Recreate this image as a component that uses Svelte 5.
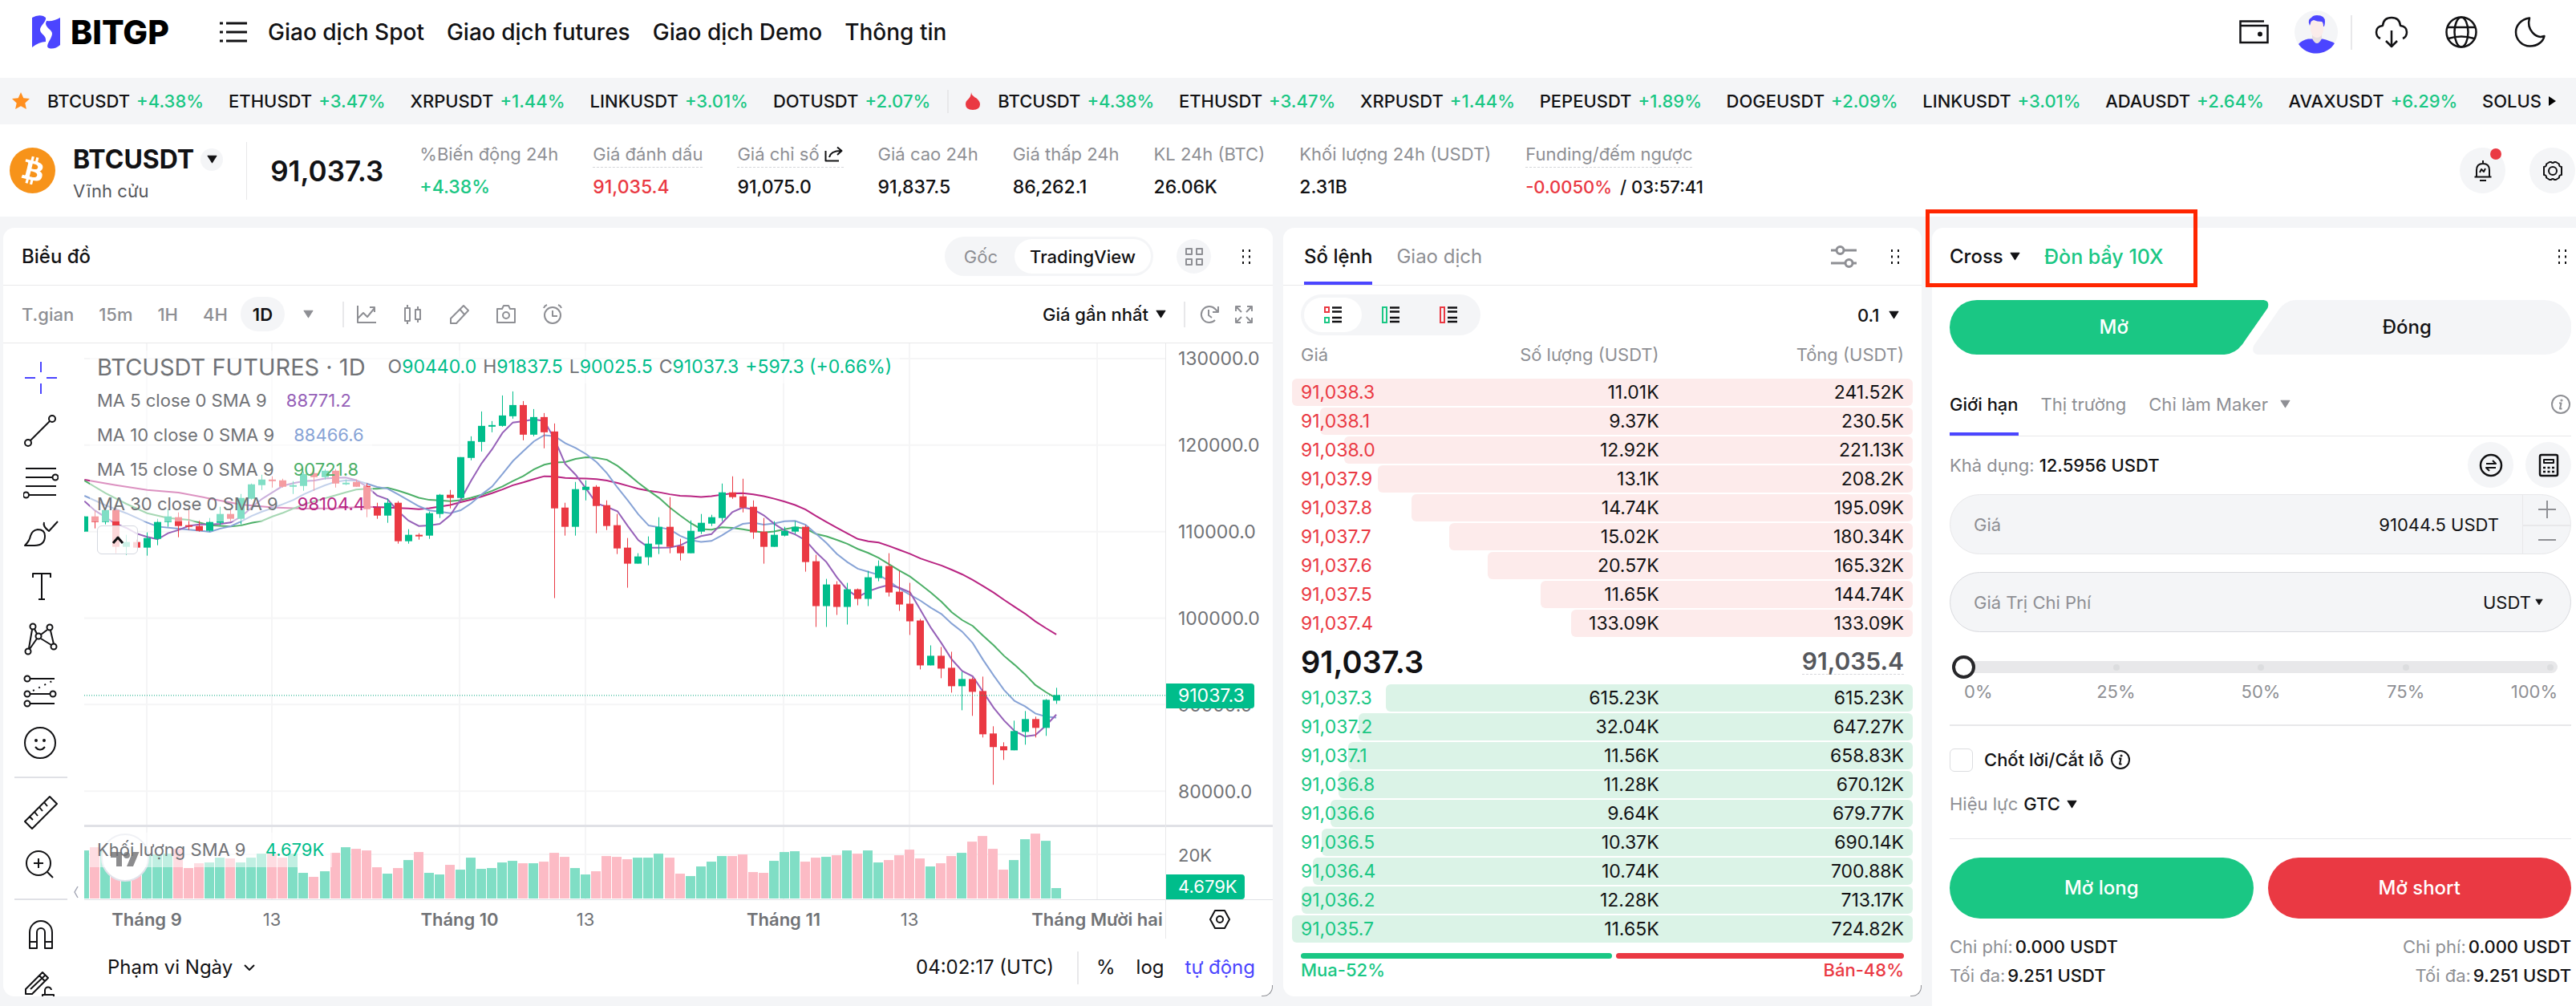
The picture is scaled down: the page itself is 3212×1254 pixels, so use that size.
<script lang="ts">
  type Pair = [string, string];
  type Row = [string, string, string];

  const nav = ['Giao dịch Spot', 'Giao dịch futures', 'Giao dịch Demo', 'Thông tin'];
  const favourites: Pair[] = [
    ['BTCUSDT', '+4.38%'], ['ETHUSDT', '+3.47%'], ['XRPUSDT', '+1.44%'], ['LINKUSDT', '+3.01%'], ['DOTUSDT', '+2.07%'],
  ];
  const hot: Pair[] = [
    ['BTCUSDT', '+4.38%'], ['ETHUSDT', '+3.47%'], ['XRPUSDT', '+1.44%'], ['PEPEUSDT', '+1.89%'],
    ['DOGEUSDT', '+2.09%'], ['LINKUSDT', '+3.01%'], ['ADAUSDT', '+2.64%'], ['AVAXUSDT', '+6.29%'],
  ];
  const intervals = ['T.gian', '15m', '1H', '4H', '1D'];

  const asks: Row[] = [
    ['91,038.3', '11.01K', '241.52K'], ['91,038.1', '9.37K', '230.5K'], ['91,038.0', '12.92K', '221.13K'],
    ['91,037.9', '13.1K', '208.2K'], ['91,037.8', '14.74K', '195.09K'], ['91,037.7', '15.02K', '180.34K'],
    ['91,037.6', '20.57K', '165.32K'], ['91,037.5', '11.65K', '144.74K'], ['91,037.4', '133.09K', '133.09K'],
  ];
  const bids: Row[] = [
    ['91,037.3', '615.23K', '615.23K'], ['91,037.2', '32.04K', '647.27K'], ['91,037.1', '11.56K', '658.83K'],
    ['91,036.8', '11.28K', '670.12K'], ['91,036.6', '9.64K', '679.77K'], ['91,036.5', '10.37K', '690.14K'],
    ['91,036.4', '10.74K', '700.88K'], ['91,036.2', '12.28K', '713.17K'], ['91,035.7', '11.65K', '724.82K'],
  ];
  const depth = (rows: Row[], r: Row) =>
    (100 * parseFloat(r[2])) / Math.max(...rows.map((x) => parseFloat(x[2])));

  // One entry per day: direction, high, body top, body bottom, low, volume top.
  // Levels are thirds of a plot unit.
  const days = `g1122,1122,1179,1179,873 r1100,1122,1142,1167,861 g1090,1098,1143,1152,873 r1090,1098,1236,1260,920
g1190,1218,1236,1265,930 r1210,1218,1239,1240,900 g1182,1203,1239,1269,888 g1130,1143,1206,1230,888
g1095,1122,1143,1161,885 r1107,1125,1158,1200,867 r1095,1155,1161,1173,939 r1137,1158,1176,1179,921
g1128,1143,1176,1180,918 g1087,1113,1145,1155,900 r1095,1113,1131,1140,903 g1038,1052,1131,1152,918
g1000,1002,1055,1060,900 g965,984,1004,1024,885 r972,984,989,1014,885 r980,987,1010,1014,900
g990,1004,1010,1038,885 g955,962,1008,1026,957 r940,960,975,1026,972 g945,951,975,985,951
r945,951,999,1014,882 g985,995,998,1005,861 r985,993,1011,1012,867 r1000,1008,1094,1125,873
r1072,1089,1119,1131,936 g1055,1071,1119,1146,960 r1065,1071,1215,1224,939 g1170,1191,1215,1224,909
r1185,1191,1194,1209,879 g1104,1110,1194,1206,957 g1038,1041,1113,1128,963 r1023,1041,1053,1092,927
g900,900,1053,1053,945 g822,840,903,912,900 g729,783,843,879,942 g765,780,786,807,939
g669,744,783,786,918 g654,705,747,756,912 r690,705,816,837,921 g720,750,816,822,921
r735,750,807,867,915 r774,804,1092,1428,882 r1070,1089,1161,1194,897 g993,1020,1161,1194,939
g987,1011,1022,1062,963 r1005,1011,1083,1185,951 r1062,1080,1158,1173,894 r1113,1155,1242,1263,897
r1203,1239,1299,1389,906 g1260,1272,1299,1300,900 g1197,1224,1275,1305,900 g1125,1161,1227,1263,885
r1050,1161,1236,1260,900 r1206,1233,1260,1287,960 g1137,1176,1260,1260,969 g1113,1146,1179,1188,933
g1116,1125,1149,1158,915 g999,1032,1128,1140,894 r972,1032,1050,1055,894 r981,1047,1089,1107,888
r1062,1086,1182,1206,954 r1128,1179,1236,1299,957 g1140,1191,1236,1236,912 g1160,1176,1194,1197,879
g1140,1161,1179,1188,876 r1155,1161,1293,1329,915 r1266,1290,1458,1536,900 g1356,1377,1458,1536,897
r1366,1377,1461,1491,891 g1371,1395,1461,1527,873 r1392,1395,1431,1455,885 g1326,1350,1431,1458,873
g1287,1308,1353,1365,918 r1260,1308,1407,1422,909 r1326,1404,1452,1476,891 r1371,1449,1515,1566,870
r1506,1512,1680,1695,903 g1605,1644,1680,1680,933 r1611,1644,1692,1728,921 r1629,1689,1758,1782,894
g1704,1731,1758,1848,882 r1725,1731,1779,1869,840 r1722,1776,1938,1950,819 r1908,1935,1986,2127,867
r1968,1983,1998,2034,945 g1887,1926,1998,1998,909 g1851,1881,1929,1977,831 r1872,1881,1914,1950,810
g1806,1809,1914,1944,837 g1764,1791,1812,1824,1014`.split(/\s+/);

  const level = (v: number) => Math.round(v / 3 - 158);
  const dayX = (i: number) => 78.5 + 13.03 * (i - 6);

  const candles = days.map((d, i) => {
    const [hi, top, bottom, lo, vol] = d.slice(1).split(',').map(Number);
    const up = d[0] === 'g';
    return {
      up, x: Math.round(dayX(i) - 0.5), hi: level(hi), top: level(top),
      h: Math.max(2, level(bottom) - level(top)), lo: level(lo),
      close: up ? top : bottom, volTop: Math.round(342 + vol / 3),
    };
  });

  // Moving average line; `lead` holds the points before enough closes exist.
  function average(n: number, lead: [number, number][]) {
    const pts = lead.map(([i, v]) => `${dayX(i).toFixed(1)},${(v / 3 - 158).toFixed(1)}`);
    for (let i = n; i < candles.length; i++) {
      const sum = candles.slice(i - n + 1, i + 1).reduce((s, c) => s + c.close, 0);
      pts.push(`${dayX(i).toFixed(1)},${(sum / n / 3 - 158).toFixed(1)}`);
    }
    return pts.join(' ');
  }
  const averages = [
    { n: 30, color: '#b82482', value: '98104.4', points: average(30, [[0, 985], [3, 1005], [6, 1023], [9, 1033], [12, 1055], [15, 1078], [18, 1088], [21, 1093], [24, 1091], [27, 1086], [29, 1088]]) },
    { n: 15, color: '#4caf67', value: '90721.8', points: average(15, [[0, 988], [2, 1035], [4, 1075], [6, 1110], [8, 1128], [10, 1135], [12, 1155], [14, 1160]]) },
    { n: 10, color: '#87a3d6', value: '88466.6', points: average(10, [[0, 1045], [2, 1080], [4, 1110], [6, 1145], [7, 1160], [9, 1168]]) },
    { n: 5, color: '#9661b8', value: '88771.2', points: average(5, [[0, 1065], [1, 1100], [2, 1125], [3, 1150], [4, 1165]]) },
  ];
  const legend = [...averages].reverse();
  const times = [
    { x: 78, text: 'Tháng 9', month: true }, { x: 234, text: '13', month: false },
    { x: 468, text: 'Tháng 10', month: true }, { x: 625, text: '13', month: false },
    { x: 872, text: 'Tháng 11', month: true }, { x: 1029, text: '13', month: false },
    { x: 1263, text: 'Tháng Mười hai', month: true },
  ];
  const gridY = [19, 127, 235, 343, 451, 559, 638];
  const prices = ['130000.0', '120000.0', '110000.0', '100000.0', '90000.0', '80000.0'];
  const ohlc: Pair[] = [['O', '90440.0'], ['H', '91837.5'], ['L', '90025.5'], ['C', '91037.3']];
  const percents = ['0%', '25%', '50%', '75%', '100%'];
</script>

{#snippet caret()}
  <svg class="caret" viewBox="0 0 12 10" aria-hidden="true"><path d="M1 1h10L6 9z" /></svg>
{/snippet}

{#snippet grip()}
  <button class="plain grip" aria-label="Di chuyển">
    <svg width="12" height="18" viewBox="0 0 12 18"><path d="M1 0h2v3H1zM9 0h2v3H9zM1 7.500h2v3H1zM9 7.500h2v3H9zM1 15h2v3H1zM9 15h2v3H9z" /></svg>
  </button>
{/snippet}

{#snippet drop(name: string, value: string)}
  <label class="drop">
    <select aria-label={name}><option>{value}</option></select>
    {@render caret()}
  </label>
{/snippet}

{#snippet info()}
  <svg class="line" width="26" height="26" viewBox="0 0 26 26" stroke-width="2" aria-hidden="true">
    <circle cx="13" cy="13" r="11" /><path d="M11 11.500h2.500L12 18.500h2.500" /><circle cx="14" cy="8" r="0.600" />
  </svg>
{/snippet}

{#snippet levels(rows: Row[])}
  {#each rows as r}
    <tr>
      <td><span class="bar" style:width="{depth(rows, r)}%"></span>{r[0]}</td>
      <td>{r[1]}</td>
      <td>{r[2]}</td>
    </tr>
  {/each}
{/snippet}

{#snippet costs()}
  <dl class="costs">
    <div><dt>Chi phí:</dt><dd>0.000 USDT</dd></div>
    <div><dt>Tối đa:</dt><dd>9.251 USDT</dd></div>
  </dl>
{/snippet}

<div class="page">
  <header class="top">
    <a class="logo" href="#home">
      <svg width="35" height="42" viewBox="0 0 35 42" aria-hidden="true">
        <path fill="#4b45ff" d="M0 3 Q7-1 14 1 L17 3 C18 8 10 13 10 18 C10 23 17 25 17 30 L17 33 Q9 33 0 40z" />
        <path fill="#4b45ff" d="M35 3 V37 Q28 43 21 41 C15 39 25 29 25 23 C25 18 17 16 17 10 L18 7 Q27 8 35 3z" />
      </svg>
      <span>BITGP</span>
    </a>
    <nav>
      <button class="plain" aria-label="Danh mục">
        <svg class="line" width="34" height="26" viewBox="0 0 34 26" stroke-width="3"><path d="M0 2h4M8 2h26M0 13h4M8 13h26M0 24h4M8 24h26" /></svg>
      </button>
      {#each nav as item}<a href="#nav">{item}</a>{/each}
    </nav>
    <div class="tools">
      <button class="plain" aria-label="Ví">
        <svg class="line" width="38" height="30" viewBox="0 0 38 30" stroke-width="2.500"><path d="M31 1.500H1.500V28h34V7H1.500" stroke-linejoin="miter" /><circle cx="26" cy="17.500" r="1.700" fill="currentColor" /></svg>
      </button>
      <button class="plain avatar" aria-label="Tài khoản">
        <svg width="54" height="54" viewBox="0 0 54 54">
          <circle cx="27" cy="27" r="27" fill="#f4f5f7" />
          <path d="M5 42Q9 37 17 35.500h18q9 2 15 5.500A27 27 0 0 1 5 42z" fill="#4b45ff" />
          <path d="M22 27h12v8q-3 6-6 6t-6-6z" fill="#e8dfe0" />
          <path d="M20 13h16v12q-2 9-8 9t-8-9z" fill="#fbecea" />
          <path d="M19 19q-2-4-1-7 1-2 3-3 2-3 7-3 10 0 10 8 0 3-1 6h-1q0-5-2-6-6 0-10-2-4 1-4 4z" fill="#4b45ff" />
        </svg>
      </button>
      <span class="rule"></span>
      <button class="plain" aria-label="Tải xuống">
        <svg class="line" width="42" height="40" viewBox="0 0 42 40" stroke-width="2.500"><path d="M7 28Q2 26 2 20q0-7 8-8Q11 2 21 2t11 10q8 1 8 8 0 6-5 8M21 18v19M14 31l7 7 7-7" /></svg>
      </button>
      <button class="plain" aria-label="Ngôn ngữ">
        <svg class="line" width="42" height="42" viewBox="0 0 42 42" stroke-width="2.500"><circle cx="21" cy="21" r="18.500" /><ellipse cx="21" cy="21" rx="8.500" ry="18.500" /><path d="M4 15h34M5 29q16-5 32 0" /></svg>
      </button>
      <button class="plain" aria-label="Giao diện tối">
        <svg class="line" width="40" height="40" viewBox="0 0 40 40" stroke-width="2.500"><path d="M19 2.500C8 4 2 12 2 20a17.500 17.500 0 0 0 17.500 17.500C29 37.500 36 32 37.500 25 27 29 15 17 19 2.500z" /></svg>
      </button>
    </div>
  </header>

  <div class="ticker">
    <svg width="22" height="22" viewBox="0 0 24 24" aria-hidden="true"><path fill="#ff8f1f" d="M12 0l3.600 7.800 8.400 1-6.200 5.800 1.700 8.400L12 18.900 4.500 23l1.700-8.400L0 8.800l8.400-1z" /></svg>
    <div class="pairs">
      {#each favourites as [name, change]}<a href="#pair">{name}<b>{change}</b></a>{/each}
    </div>
    <span class="rule"></span>
    <svg width="18" height="22" viewBox="0 0 18 22" aria-hidden="true"><path fill="#ea3943" d="M7 0q0 3 3 5 2 2 3 2 5 4 5 8 0 7-9 7t-9-7q0-4 3-6 4-4 4-9z" /></svg>
    <div class="pairs hot">
      {#each hot as [name, change]}<a href="#pair">{name}<b>{change}</b></a>{/each}
      <a href="#pair">SOLUS</a>
    </div>
    <button class="plain next" aria-label="Tiếp"><svg width="11" height="14" viewBox="0 0 11 14"><path d="M1 1l9 6-9 6z" /></svg></button>
  </div>

  <section class="market">
    <svg class="coin" viewBox="0 0 32 32" aria-hidden="true">
      <circle cx="16" cy="16" r="16" fill="#f7931a" />
      <path fill="#fff" d="M23.189 14.02c.314-2.096-1.283-3.223-3.465-3.975l.708-2.84-1.728-.43-.69 2.765c-.454-.114-.92-.22-1.385-.326l.695-2.783L15.596 6l-.708 2.839c-.376-.086-.746-.17-1.104-.26l.002-.009-2.384-.595-.46 1.846s1.283.294 1.256.312c.7.175.826.638.805 1.006l-.806 3.235c.048.012.11.03.18.057l-.183-.045-1.13 4.532c-.086.212-.303.531-.793.41.018.025-1.256-.313-1.256-.313l-.858 1.978 2.250.561c.418.105.828.215 1.231.318l-.715 2.872 1.727.43.708-2.840c.472.127.93.245 1.378.357l-.706 2.828 1.728.43.715-2.866c2.948.558 5.164.333 6.097-2.333.752-2.146-.037-3.385-1.588-4.192 1.130-.26 1.980-1.003 2.207-2.538zm-3.950 5.538c-.533 2.147-4.148.986-5.320.695l.95-3.805c1.172.293 4.929.872 4.370 3.110zm.535-5.569c-.487 1.953-3.495.96-4.470.717l.86-3.450c.975.243 4.118.696 3.610 2.733z" />
    </svg>
    <div class="symbol">
      <h1>BTCUSDT <button class="plain" aria-label="Chọn cặp">{@render caret()}</button></h1>
      <span>Vĩnh cửu</span>
    </div>
    <span class="rule"></span>
    <strong class="last">91,037.3</strong>
    <dl class="stats">
      <div><dt>%Biến động 24h</dt><dd class="up">+4.38%</dd></div>
      <div><dt class="dotted">Giá đánh dấu</dt><dd class="down">91,035.4</dd></div>
      <div>
        <dt class="dotted">Giá chỉ số <svg class="line" width="24" height="20" viewBox="0 0 24 20" stroke-width="2" aria-hidden="true"><path d="M1.500 6v12.500H18M6 14Q8 6 20 6M16 1.500L21.500 6 16 11" /></svg></dt>
        <dd>91,075.0</dd>
      </div>
      <div><dt>Giá cao 24h</dt><dd>91,837.5</dd></div>
      <div><dt>Giá thấp 24h</dt><dd>86,262.1</dd></div>
      <div><dt>KL 24h (BTC)</dt><dd>26.06K</dd></div>
      <div><dt>Khối lượng 24h (USDT)</dt><dd>2.31B</dd></div>
      <div><dt class="dotted">Funding/đếm ngược</dt><dd class="funding"><span class="down">-0.0050%</span><span>/ 03:57:41</span></dd></div>
    </dl>
    <div class="actions">
      <button class="round" aria-label="Thông báo">
        <svg class="line" width="24" height="28" viewBox="0 0 24 28" stroke-width="2"><path d="M12 1v3M4 21v-8q0-8 8-8t8 8v8M1.500 21.500h21M8 26h8M8 16l2-4 3 3 2-4" /></svg>
        <i class="badge"></i>
      </button>
      <button class="round" aria-label="Cài đặt">
        <svg class="line" width="28" height="28" viewBox="0 0 28 28" stroke-width="2"><path d="M10 3h2q2 2 4 0h2l4 2.500q-.500 3 3 3.500v10q-3.500.500-3 3.500L18 25h-2q-2-2-4 0h-2l-4-2.500q.500-3-3-3.500V9q3.500-.500 3-3.500z" /><circle cx="14" cy="14" r="5" /></svg>
      </button>
    </div>
  </section>

  <main>
    <section class="panel chart">
      <header class="head">
        <h2>Biểu đồ</h2>
        <div class="switch">
          <button>Gốc</button>
          <button class="on">TradingView</button>
        </div>
        <button class="mini" aria-label="Bố cục">
          <svg class="line" width="24" height="24" viewBox="0 0 24 24" stroke-width="2"><rect x="2" y="2" width="7" height="7" /><rect x="15" y="2" width="7" height="7" /><rect x="2" y="15" width="7" height="7" /><rect x="15" y="15" width="7" height="7" /></svg>
        </button>
        {@render grip()}
      </header>
      <div class="toolbar">
        <div class="intervals">
          {#each intervals as t}<button class:on={t === '1D'}>{t}</button>{/each}
        </div>
        <button class="plain more" aria-label="Thêm khung giờ">{@render caret()}</button>
        <span class="rule"></span>
        <div class="drawing">
          <button class="plain" aria-label="Chỉ báo"><svg class="line" width="26" height="24" viewBox="0 0 26 24" stroke-width="2"><path d="M2 1v21h23M2 17l7-7 5 5 9-11M17 3h6v6" /></svg></button>
          <button class="plain" aria-label="Loại nến"><svg class="line" width="26" height="26" viewBox="0 0 26 26" stroke-width="2"><path d="M3 5h6v16H3zM6 1v4M6 21v4M16 7h6v12h-6zM19 3v4M19 19v4" /></svg></button>
          <button class="plain" aria-label="Vẽ"><svg class="line" width="26" height="26" viewBox="0 0 26 26" stroke-width="2"><path d="M18 2l6 6L9 24H2v-6zM13 6l6 7" /></svg></button>
          <button class="plain" aria-label="Chụp màn hình"><svg class="line" width="26" height="26" viewBox="0 0 26 26" stroke-width="2"><path d="M2 6h6l2-4h6l2 4h6v17H2z" /><circle cx="13" cy="14" r="4" /></svg></button>
          <button class="plain" aria-label="Cảnh báo"><svg class="line" width="26" height="26" viewBox="0 0 26 26" stroke-width="2"><circle cx="13" cy="14" r="10" /><path d="M13 8v7h6M2 5q1-3 4-4M24 5q-1-3-4-4" /></svg></button>
        </div>
        <div class="source">{@render drop('Nguồn giá', 'Giá gần nhất')}</div>
        <span class="rule"></span>
        <button class="plain" aria-label="Khôi phục"><svg class="line" width="26" height="24" viewBox="0 0 26 24" stroke-width="2"><path d="M20 19A10 10 0 1 1 20 5l3 3M24 2v7h-7M12 6v7l4 3" /></svg></button>
        <button class="plain" aria-label="Toàn màn hình"><svg class="line" width="22" height="22" viewBox="0 0 22 22" stroke-width="2"><path d="M1 7V1h6M15 1h6v6M21 15v6h-6M7 21H1v-6M1 1l7 7M21 1l-7 7M21 21l-7-7M1 21l7-7" /></svg></button>
      </div>

      <div class="body">
        <div class="strip">
          <button aria-label="Con trỏ"><svg class="line blue" width="44" height="44" viewBox="0 0 44 44" stroke-width="2"><path d="M22 2v13M22 29v13M2 22h13M29 22h13" /></svg></button>
          <button aria-label="Đường xu hướng"><svg class="line" width="44" height="44" viewBox="0 0 44 44" stroke-width="2"><circle cx="6" cy="38" r="4" /><circle cx="36" cy="8" r="4" /><path d="M9 35L33 11" /></svg></button>
          <button aria-label="Fibonacci"><svg class="line" width="44" height="44" viewBox="0 0 44 44" stroke-width="2"><path d="M3 5h38M3 16h34M3 27h38M7 38h34" /><circle cx="40" cy="16" r="3.500" /><circle cx="3.500" cy="38" r="3.500" /></svg></button>
          <button aria-label="Cọ vẽ"><svg class="line" width="44" height="44" viewBox="0 0 44 44" stroke-width="2"><path d="M2 36Q8 30 9 24q2-7 9-8 9 0 9 8 0 12-13 12zM26 7q-2 5 6 11L43 6" /></svg></button>
          <button aria-label="Văn bản"><svg class="line" width="44" height="44" viewBox="0 0 44 44" stroke-width="2"><path d="M12 11V6h22v5M23 6v32M19 38h8" /></svg></button>
          <button aria-label="Mẫu hình"><svg class="line" width="44" height="44" viewBox="0 0 44 44" stroke-width="2"><circle cx="12" cy="7" r="3.500" /><circle cx="33" cy="8" r="3.500" /><circle cx="19" cy="19" r="3.500" /><circle cx="6" cy="38" r="3.500" /><circle cx="38" cy="32" r="3.500" /><path d="M11 11L7 34M14 10l3 6M22 17l8-6M34 12l4 17M22 22l13 8M17 22L8 35" /></svg></button>
          <button aria-label="Dự báo"><svg class="line" width="44" height="44" viewBox="0 0 44 44" stroke-width="2"><circle cx="5" cy="7" r="3.500" /><circle cx="5" cy="26" r="3.500" /><circle cx="5" cy="38" r="3.500" /><circle cx="37" cy="26" r="3.500" /><path d="M9 7h30M9 26h25M9 38h30" /><path d="M12 22L38 9" stroke-dasharray="2 6" /></svg></button>
          <button aria-label="Biểu tượng"><svg class="line" width="44" height="44" viewBox="0 0 44 44" stroke-width="2"><circle cx="21" cy="22" r="19" /><path d="M15 27q6 7 12 0" /><circle cx="16" cy="19" r="1" /><circle cx="26" cy="19" r="1" /></svg></button>
          <hr />
          <button aria-label="Thước"><svg class="line" width="44" height="44" viewBox="0 0 44 44" stroke-width="2"><path d="M33 2l9 9L11 42l-9-9zM8 27l4 4M14 21l4 5M20 15l4 5M26 9l4 5" /></svg></button>
          <button aria-label="Phóng to"><svg class="line" width="44" height="44" viewBox="0 0 44 44" stroke-width="2"><circle cx="19" cy="20" r="15" /><path d="M30 31l7 7M19 14v12M13 20h12" /></svg></button>
          <hr />
          <button aria-label="Nam châm"><svg class="line" width="44" height="44" viewBox="0 0 44 44" stroke-width="2"><path d="M8 39V19a14 14 0 0 1 28 0v20h-9V19a5 5 0 0 0-10 0v20zM8 31h9M27 31h9" /></svg></button>
          <button aria-label="Khóa vẽ"><svg class="line" width="44" height="44" viewBox="0 0 44 44" stroke-width="2"><path d="M3 25L24 4l7 7-20 20H3zM9 25L28 7M20 8l7 7M24 32h14v10H24zM27 32v-5a4 4 0 0 1 8-1" /></svg></button>
        </div>

        <div class="view">
          <div class="panes">
            <svg class="plot" viewBox="0 0 1348 694" preserveAspectRatio="none" role="img" aria-label="Biểu đồ nến">
              {#each times as t}<path class="grid" d="M{t.x} 0V694" />{/each}
              {#each gridY as y}<path class="grid" d="M0 {y}H1348" />{/each}
              {#each candles as c}
                <rect class={c.up ? 'vup' : 'vdown'} x={c.x - 6} y={c.volTop} width="12" height={693 - c.volTop} />
              {/each}
              {#each averages as a}<polyline points={a.points} stroke={a.color} />{/each}
              {#each candles as c}
                <g class={c.up ? 'cup' : 'cdown'}>
                  <rect x={c.x} y={c.hi} width="1" height={c.lo - c.hi} />
                  <rect x={c.x - 4} y={c.top} width="9" height={c.h} />
                </g>
              {/each}
              <path class="mark" d="M0 439.500H1348" />
            </svg>
            <div class="overlay">
              <p class="title">BTCUSDT FUTURES · 1D <span class="ohlc">{#each ohlc as [k, v]}<span>{k}<b>{v}</b></span>{/each}<b>+597.3 (+0.66%)</b></span></p>
              {#each legend as l}
                <p class="ma">MA {l.n} close 0 SMA 9 <b style:color={l.color}>{l.value}</b></p>
              {/each}
              <button class="fold" aria-label="Thu gọn"><svg class="line" width="18" height="12" viewBox="0 0 18 12" stroke-width="3"><path d="M3 10l6-7 6 7" /></svg></button>
            </div>
            <div class="volume">
              <svg class="tv" width="60" height="60" viewBox="0 0 60 60" aria-hidden="true"><circle cx="30" cy="30" r="29" fill="#fff" stroke="#e0e3eb" stroke-width="2" /><g fill="#18191d" transform="translate(12 19)"><path d="M14 22H7V11H0V4h14zM28 22h-8l7.500-18h8z" /><circle cx="20" cy="8" r="4" /></g></svg>
              <p class="ma">Khối lượng SMA 9 <b class="vol">4.679K</b></p>
            </div>
            <svg class="handle line" width="6" height="16" viewBox="0 0 6 16" stroke-width="1.500" aria-hidden="true"><path d="M5 1L1 8l4 7" /></svg>
          </div>
          <div class="axis">
            <div class="prices">{#each prices as p}<span>{p}</span>{/each}</div>
            <span class="tag now">91037.3</span>
            <div class="vols"><span>20K</span></div>
            <span class="tag size">4.679K</span>
          </div>
          <div class="times">
            {#each times as t}<span class:month={t.month} style:left="{(t.x * 100) / 1348}%">{t.text}</span>{/each}
          </div>
          <button class="plain corner" aria-label="Cài đặt biểu đồ"><svg class="line" width="28" height="26" viewBox="0 0 28 26" stroke-width="2"><path d="M8 2h12l6 11-6 11H8L2 13z" /><circle cx="14" cy="13" r="4" /></svg></button>
          <footer>
            <label class="range">
              <select aria-label="Phạm vi ngày"><option>Phạm vi Ngày</option></select>
              <svg class="line" width="16" height="10" viewBox="0 0 16 10" stroke-width="2" aria-hidden="true"><path d="M2 2l6 6 6-6" /></svg>
            </label>
            <button class="plain clock">04:02:17 (UTC)</button>
            <span class="rule"></span>
            <button class="plain">%</button>
            <button class="plain">log</button>
            <button class="plain auto">tự động</button>
          </footer>
        </div>
      </div>
      <i class="resize"></i>
    </section>

    <section class="panel book">
      <header class="head">
        <div class="tabs"><button class="on">Sổ lệnh</button><button>Giao dịch</button></div>
        <button class="plain tune" aria-label="Tùy chỉnh"><svg class="line" width="34" height="30" viewBox="0 0 34 30" stroke-width="3"><path d="M1 7h7M17 7h16M1 23h18M28 23h5" /><circle cx="12.500" cy="7" r="4.500" /><circle cx="23.500" cy="23" r="4.500" /></svg></button>
        {@render grip()}
      </header>
      <div class="filters">
        <div class="modes">
          <button class="on" aria-label="Mua và bán"><svg width="22" height="21" viewBox="0 0 22 21"><path d="M10 1.500h12M10 6.500h12M10 14h12M10 19h12" stroke="#121214" stroke-width="2.500" /><rect x="1" y="1" width="5" height="6" fill="none" stroke="#ea3943" stroke-width="2" /><rect x="1" y="14" width="5" height="6" fill="none" stroke="#1ac784" stroke-width="2" /></svg></button>
          <button aria-label="Chỉ mua"><svg width="22" height="21" viewBox="0 0 22 21"><path d="M10 1.500h12M10 6.500h12M10 14h12M10 19h12" stroke="#121214" stroke-width="2.500" /><rect x="1" y="1" width="5" height="19" fill="none" stroke="#1ac784" stroke-width="2" /></svg></button>
          <button aria-label="Chỉ bán"><svg width="22" height="21" viewBox="0 0 22 21"><path d="M10 1.500h12M10 6.500h12M10 14h12M10 19h12" stroke="#121214" stroke-width="2.500" /><rect x="1" y="1" width="5" height="19" fill="none" stroke="#ea3943" stroke-width="2" /></svg></button>
        </div>
        {@render drop('Độ sâu', '0.1')}
      </div>
      <table class="asks">
        <thead><tr><th>Giá</th><th>Số lượng (USDT)</th><th>Tổng (USDT)</th></tr></thead>
        <tbody>{@render levels(asks)}</tbody>
      </table>
      <div class="mid"><strong>91,037.3</strong><span>91,035.4</span></div>
      <table class="bids"><tbody>{@render levels(bids)}</tbody></table>
      <div class="ratio"><i></i><i></i></div>
      <div class="sides"><span class="up">Mua-52%</span><span class="down">Bán-48%</span></div>
      <i class="resize"></i>
    </section>

    <section class="panel trade">
      <header class="head">
        {@render drop('Chế độ ký quỹ', 'Cross')}
        <button class="plain lever">Đòn bẩy 10X</button>
        {@render grip()}
      </header>
      <div class="frame"></div>
      <div class="openclose">
        <button class="open"><svg viewBox="0 0 398 68" preserveAspectRatio="none" aria-hidden="true"><path d="M34 0H392Q400 1 397 10L369 50Q359 67 343 68H34A34 34 0 0 1 34 0z" /></svg><span>Mở</span></button>
        <button class="close"><svg viewBox="0 0 397 68" preserveAspectRatio="none" aria-hidden="true"><path d="M54 0H363A34 34 0 0 1 363 68H6Q-2 66 1 57L29 17Q39 0 54 0z" /></svg><span>Đóng</span></button>
      </div>
      <div class="types">
        <button class="on">Giới hạn</button>
        <button>Thị trường</button>
        {@render drop('Loại lệnh khác', 'Chỉ làm Maker')}
        <button class="plain hint" aria-label="Thông tin">{@render info()}</button>
      </div>
      <div class="avail">
        <span>Khả dụng:</span> <strong>12.5956 USDT</strong>
        <button class="round" aria-label="Chuyển tiền"><svg class="line" width="30" height="30" viewBox="0 0 30 30" stroke-width="2.500"><circle cx="15" cy="15" r="13" /><path d="M9 13h12l-4-4M21 18H9l4 4" stroke-width="2" /></svg></button>
        <button class="round" aria-label="Máy tính"><svg class="line" width="26" height="30" viewBox="0 0 26 30" stroke-width="2.500"><rect x="2" y="2" width="22" height="26" rx="2" /><path d="M7 8h12v4H7z" stroke-width="2" /><path d="M6 18h3M11.500 18h3M17 18h3M6 23h3M11.500 23h3M17 23h3" stroke-width="2.500" /></svg></button>
      </div>
      <div class="field">
        <label for="price">Giá</label>
        <input id="price" value="91044.5 USDT" />
        <div class="steps">
          <button aria-label="Tăng"><svg class="line" width="22" height="22" viewBox="0 0 22 22" stroke-width="2"><path d="M0 11h22M11 0v22" /></svg></button>
          <button aria-label="Giảm"><svg class="line" width="22" height="22" viewBox="0 0 22 22" stroke-width="2"><path d="M0 11h22" /></svg></button>
        </div>
      </div>
      <div class="field cost">
        <input aria-label="Giá Trị Chi Phí" placeholder="Giá Trị Chi Phí" />
        {@render drop('Đơn vị', 'USDT')}
      </div>
      <div class="slider">
        <div class="dots">{#each percents as _}<i></i>{/each}</div>
        <input type="range" min="0" max="100" value="0" aria-label="Tỷ lệ" />
      </div>
      <div class="percents">{#each percents as p}<span>{p}</span>{/each}</div>
      <hr class="thick" />
      <label class="tpsl"><input type="checkbox" /> Chốt lời/Cắt lỗ {@render info()}</label>
      <div class="tif"><span>Hiệu lực</span>{@render drop('Hiệu lực', 'GTC')}</div>
      <hr />
      <div class="submit">
        <button class="long">Mở long</button>
        <button class="short">Mở short</button>
      </div>
      <div class="summary">{@render costs()}{@render costs()}</div>
    </section>
  </main>
</div>

<style>
  :global(body) { background: #f4f5f7; overflow-x: hidden; }
  .page {
    --ink: #121214; --grey: #8e8f94; --pale: #f4f5f7; --rule: #e8e8ea;
    --up: #1ac784; --down: #ea3943; --blue: #4b45ff;
    font-family: Inter, "Noto Sans", sans-serif; font-size: 22px; font-weight: 500; line-height: 30px;
    color: var(--ink); white-space: nowrap;
  }
  .page *, .page *::before { box-sizing: border-box; }
  h1, h2, p, dl, dd, hr { margin: 0; }
  a { color: inherit; text-decoration: none; }
  button, input, select { font: inherit; color: inherit; border: 0; padding: 0; margin: 0; background: none; outline: 0; }
  button { cursor: pointer; }
  select { appearance: none; cursor: pointer; }
  i { display: block; }
  svg { display: block; flex: none; }
  .plain { display: flex; align-items: center; }
  .line { fill: none; stroke: currentColor; stroke-linejoin: round; }
  .caret { width: 13px; height: 11px; fill: currentColor; stroke: currentColor; stroke-linejoin: round; }
  .drop { display: flex; align-items: center; gap: 8px; }
  .rule { width: 2px; background: var(--rule); flex: none; }
  .up { color: var(--up); }
  .down { color: var(--down); }

  .top { display: flex; align-items: center; height: 97px; padding: 0 37px 17px 40px; background: #fff; }
  .logo { display: flex; align-items: center; gap: 13px; font-size: 41px; font-weight: 800; width: 234px; color: #000; }
  nav { display: flex; align-items: center; gap: 28px; font-size: 28px; }
  nav button { margin-right: -2px; }
  .tools { display: flex; align-items: center; margin-left: auto; }
  .tools .avatar { margin: 0 16px 0 31px; }
  .tools .rule { height: 43px; margin-right: 28px; }
  .tools .rule ~ button + button { margin-left: 45px; }

  .ticker { display: flex; align-items: center; height: 58px; padding: 0 24px 0 15px; background: var(--pale); }
  .pairs { display: flex; gap: 31px; margin-left: 22px; }
  .pairs b { font-weight: 500; color: var(--up); margin-left: 8px; }
  .ticker .rule { height: 29px; margin: 0 21px; }
  .pairs.hot { flex: 1; justify-content: space-between; gap: 0; }
  .next { margin-left: 8px; }

  .market { display: flex; align-items: center; height: 115px; padding: 0 1px 0 12px; background: #fff; }
  .coin { width: 57px; height: 57px; }
  .symbol { margin-left: 22px; padding-top: 10px; }
  .symbol h1 { display: flex; align-items: center; gap: 8px; font-size: 32px; font-weight: 700; line-height: 40px; }
  .symbol h1 button { width: 28px; height: 28px; border-radius: 50%; background: var(--pale); justify-content: center; }
  .symbol span { display: block; line-height: 38px; color: #55575c; font-weight: 400; }
  .market > .rule { height: 72px; margin: 0 29px; width: 1px; }
  .last { font-size: 35px; font-weight: 600; }
  .stats { display: flex; gap: 43px; margin-left: 45px; }
  .stats dt { display: flex; align-items: center; gap: 6px; line-height: 32px; margin-bottom: 8px; color: var(--grey); font-weight: 400; border-bottom: 1px dashed transparent; }
  .stats dt.dotted { border-bottom-color: #d5d6da; }
  .stats dt svg { color: var(--ink); }
  .stats dd { line-height: 32px; font-size: 23px; }
  .stats dd.funding { display: flex; gap: 10px; width: 207px; font-size: 22px; }
  .actions { display: flex; gap: 30px; margin-left: auto; }
  .round { position: relative; display: flex; align-items: center; justify-content: center; width: 57px; height: 57px; border-radius: 50%; background: var(--pale); }
  .badge { position: absolute; top: 1px; right: 5px; width: 14px; height: 14px; border-radius: 50%; background: var(--down); }

  main { display: grid; grid-template-columns: minmax(0, 1583fr) minmax(0, 796fr) minmax(0, 803fr); gap: 13px; padding: 14px 0 0 4px; background: var(--pale); }
  .panel { position: relative; background: #fff; border-radius: 14px; margin-bottom: 12px; }
  .head { display: flex; align-items: center; height: 72px; border-bottom: 1px solid var(--rule); padding: 0 27px 0 23px; }
  .grip svg { fill: currentColor; }
  h2 { font-size: 24px; font-weight: 500; }
  .resize { position: absolute; right: 0; bottom: 0; width: 14px; height: 14px; border: solid #8e8f94; border-width: 0 1px 1px 0; border-radius: 0 0 12px 0; }

  .switch { display: flex; height: 49px; padding: 3px; border-radius: 25px; background: var(--pale); margin-left: auto; color: var(--grey); }
  .switch button { padding: 0 21px; border-radius: 22px; font-weight: 400; }
  .switch .on { background: #fff; color: var(--ink); font-weight: 500; padding: 0 19px; }
  .mini { display: flex; align-items: center; justify-content: center; width: 43px; height: 43px; margin: 0 38px 0 29px; border-radius: 50%; background: var(--pale); color: var(--grey); }

  .toolbar { display: flex; align-items: center; height: 72px; border-bottom: 1px solid var(--rule); padding: 0 25px 0 8px; color: var(--grey); }
  .intervals { display: flex; gap: 1px; }
  .intervals button { height: 43px; padding: 0 15px; border-radius: 22px; }
  .intervals .on { background: var(--pale); color: var(--ink); font-weight: 600; }
  .more { margin: 0 36px 0 23px; }
  .toolbar .rule { height: 32px; }
  .drawing { display: flex; gap: 32px; margin-left: 15px; }
  .source { margin: 0 22px 0 auto; color: var(--ink); }
  .toolbar > .plain:nth-last-child(2) { margin: 0 19px 0 17px; }

  .body { display: flex; }
  .strip { contain: size; overflow: hidden; width: 101px; flex: none; padding: 10px 0 0 14px; }
  .strip button { display: flex; align-items: center; justify-content: center; width: 66px; height: 65px; }
  .strip hr { width: 66px; height: 2px; border: 0; background: #e0e1e6; margin: 10px 0; }
  .blue { color: var(--blue); }
  .view { flex: 1; min-width: 0; display: grid; grid-template-columns: minmax(0, 1fr) 134px; grid-template-rows: 694px 48px 72px; color: #707276; font-weight: 400; }
  .panes { position: relative; border-bottom: 1px solid #e0e1e6; }
  .plot { width: 100%; height: 100%; }
  .panes::after { content: ""; position: absolute; left: 0; right: -134px; top: 600px; height: 3px; background: #e0e1e6; }
  .grid { stroke: #f5f5f6; stroke-width: 2; }
  polyline { fill: none; stroke-width: 2; }
  .mark { stroke: #00a87c; stroke-width: 1; stroke-dasharray: 1 2; }
  .cup { fill: #00bd8b; }
  .cdown { fill: #ea3943; }
  .vup { fill: #80dec5; }
  .vdown { fill: #fcbbc5; }
  .overlay { position: absolute; left: 7px; top: 9px; }
  .overlay p, .volume p { width: max-content; padding: 0 10px 0 9px; background: rgba(255, 255, 255, 0.5); line-height: 43px; }
  .overlay b, .volume b { font-weight: 400; }
  .overlay .title { display: flex; align-items: center; font-size: 29px; line-height: 41px; }
  .ohlc { display: flex; gap: 8px; margin-left: 28px; font-size: 23px; color: #707276; }
  .ohlc b, .vol { color: #00bd8b; }
  .ma b { margin-left: 18px; }
  .fold { display: flex; align-items: center; justify-content: center; width: 51px; height: 36px; margin: 5px 0 0 9px; border: 1px solid #d5d8e0; border-radius: 6px; background: rgba(255, 255, 255, 0.8); color: var(--ink); }
  .volume { position: absolute; left: 7px; top: 610px; }
  .volume .tv { position: absolute; left: 14px; top: 1px; }
  .volume p { position: relative; }
  .handle { position: absolute; left: -13px; bottom: 1px; color: #a3a6b4; }
  .axis { position: relative; border-left: 1px solid var(--rule); border-bottom: 1px solid #e0e1e6; padding-left: 15px; overflow: hidden; }
  .prices { margin-top: -35px; font-size: 23px; }
  .prices span { display: block; line-height: 108px; }
  .vols { line-height: 30px; padding-top: 10px; }
  .tag { position: absolute; left: 0; padding: 0 9px 0 15px; line-height: 31px; background: #00bd8b; color: #fff; border-radius: 0 4px 4px 0; }
  .now { top: 424px; padding-right: 12px; font-size: 23px; }
  .size { bottom: 0; }
  .times { position: relative; line-height: 48px; }
  .times span { position: absolute; transform: translateX(-50%); }
  .times .month { font-weight: 600; }
  .corner { justify-content: center; border-left: 1px solid var(--rule); color: var(--ink); padding-right: 0; }
  .view footer { grid-column: 1 / -1; display: flex; align-items: center; padding: 0 22px 0 29px; font-size: 24px; color: var(--ink); }
  .range { display: flex; align-items: center; gap: 12px; margin-right: auto; }
  .view footer .rule { height: 41px; margin: 0 22px 0 29px; }
  .view footer .rule ~ button + button { margin-left: 26px; }
  .view footer .auto { color: var(--blue); }

  .book .head { padding-left: 26px; }
  .tabs { display: flex; gap: 30px; height: 100%; font-size: 24px; color: var(--grey); margin-right: auto; }
  .tabs button, .types > button { position: relative; }
  .tabs button:not(.on), .types > button:not(.on) { font-weight: 400; }
  .tabs .on, .types .on { color: var(--ink); }
  .tabs .on::before, .types .on::before { content: ""; position: absolute; left: 0; right: 0; bottom: 0; height: 4px; background: var(--blue); }
  .tune { color: var(--grey); margin-right: 41px; }
  .filters { display: flex; align-items: center; justify-content: space-between; margin: 11px 28px 0 22px; }
  .modes { display: flex; height: 51px; padding: 4px; border-radius: 26px; background: var(--pale); }
  .modes button { display: flex; align-items: center; justify-content: center; width: 72px; border-radius: 22px; }
  .modes .on { background: #fff; }
  .filters .drop { gap: 11px; }
  table { display: block; margin: 0 11px; }
  thead, tbody { display: block; }
  tr { position: relative; z-index: 0; display: grid; grid-template-columns: 200fr 246fr 305fr; padding: 0 11px; height: 36px; line-height: 34px; }
  th, td { padding: 0; text-align: right; font-weight: 400; }
  td { font-size: 23px; }
  th { color: var(--grey); line-height: 30px; }
  th:first-child, td:first-child { text-align: left; }
  thead tr { height: 54px; padding-top: 9px; }
  .bar { position: absolute; z-index: -1; top: 0; right: 0; height: 34px; border-radius: 6px; }
  .asks .bar { background: #fdebeb; }
  .bids .bar { background: #dbf3e7; }
  .asks td:first-child { color: var(--down); }
  .bids td:first-child { color: var(--up); }
  .mid { display: flex; align-items: center; justify-content: space-between; height: 57px; padding: 0 22px; }
  .mid strong { font-size: 38px; font-weight: 600; }
  .mid span { font-size: 30px; font-weight: 600; line-height: 32px; color: #55575c; border-bottom: 1px dashed #d5d6da; }
  .ratio { display: grid; grid-template-columns: 52fr 48fr; gap: 5px; margin: 11px 22px 0; }
  .ratio i { height: 7px; border-radius: 4px; background: var(--up); }
  .ratio i + i { background: var(--down); }
  .sides { display: flex; justify-content: space-between; padding: 0 22px; line-height: 28px; }

  .trade { margin-bottom: 0; padding: 0 6px 20px 22px; border-radius: 14px 0 0 0; }
  .trade .head { border: 0; height: 71px; padding: 0 5px 0 0; font-size: 24px; }
  .lever { margin: 0 auto 0 30px; color: var(--up); font-size: 25px; }
  .frame { position: absolute; left: -8px; top: -23px; width: 339px; height: 97px; border: 5px solid #ff2600; pointer-events: none; }
  .openclose { display: flex; margin-top: 19px; font-size: 24px; }
  .openclose button { position: relative; flex: 1; height: 68px; }
  .openclose svg { position: absolute; inset: 0; width: 100%; height: 100%; }
  .openclose span { position: relative; }
  .open { color: #fff; margin-right: -20px; }
  .open span { padding-left: 12px; }
  .close span { padding-right: 12px; }
  .open svg { fill: var(--up); }
  .close svg { fill: var(--pale); }
  .types { display: flex; align-items: center; gap: 28px; height: 80px; margin-top: 22px; border-bottom: 1px solid var(--rule); color: var(--grey); }
  .types > button { height: 100%; }
  .types .drop { gap: 15px; font-weight: 400; }
  .types .hint { margin-left: auto; }
  .avail { display: flex; align-items: center; margin-top: 7px; }
  .avail span { color: var(--grey); font-weight: 400; }
  .avail strong { font-weight: 500; margin: 0 auto 0 6px; }
  .avail .round + .round { margin-left: 15px; }
  .field { display: flex; align-items: center; height: 75px; margin-top: 8px; padding-left: 29px; border: 1px solid var(--rule); border-radius: 38px; background: var(--pale); overflow: hidden; font-weight: 400; }
  .field label[for] { color: var(--grey); }
  .field input { flex: 1; min-width: 0; text-align: right; margin-right: 29px; }
  .steps { width: 60px; height: 100%; border-left: 1px solid var(--rule); color: var(--grey); }
  .steps button { display: flex; align-items: center; justify-content: center; width: 100%; height: 50%; }
  .steps button + button { border-top: 2px solid var(--rule); }
  .cost { margin-top: 22px; padding-right: 34px; border-color: #d9dade; }
  .cost .drop { gap: 5px; }
  .cost input { text-align: left; }
  .cost input::placeholder { color: var(--grey); opacity: 1; }
  .cost .caret { width: 10px; height: 9px; }
  .slider { position: relative; margin: 29px 17px 0 3px; height: 29px; }
  .dots { position: absolute; inset: 7px 0; display: flex; align-items: center; justify-content: space-between; padding: 0 5px 0 20px; border-radius: 8px; background: #e8e8ea; }
  .dots i { width: 8px; height: 8px; border-radius: 50%; background: #dcdddf; }
  input[type="range"] { position: absolute; inset: 0; width: 100%; height: 29px; appearance: none; }
  input[type="range"]::-webkit-slider-thumb { appearance: none; width: 29px; height: 29px; border-radius: 50%; border: 4px solid #27272a; background: #fff; }
  .percents { display: grid; grid-template-columns: 99px 1fr 1fr 1fr 99px; margin: 0 17px 0 18px; line-height: 32px; text-align: center; color: var(--grey); font-weight: 400; }
  .percents span:first-child { text-align: left; }
  .percents span:last-child { text-align: right; }
  .trade hr { height: 1px; border: 0; background: var(--rule); margin: 28px 0 23px; }
  .trade .thick { height: 2px; margin: 25px 0 27px; }
  .tpsl { display: flex; align-items: center; gap: 8px; height: 30px; }
  .tpsl input { appearance: none; width: 29px; height: 29px; margin-right: 6px; border: 1px solid #dcdde0; border-radius: 6px; }
  .tif { display: flex; gap: 7px; margin-top: 25px; }
  .tif span { color: var(--grey); font-weight: 400; }
  .submit { display: grid; grid-template-columns: 1fr 1fr; gap: 18px; font-size: 24px; color: #fff; }
  .submit button { height: 76px; border-radius: 38px; }
  .long { background: var(--up); }
  .short { background: var(--down); }
  .summary { display: flex; justify-content: space-between; margin-top: 17px; line-height: 36px; }
  .costs div { display: flex; gap: 3px; }
  .costs + .costs div { justify-content: flex-end; }
  .costs dt { color: var(--grey); font-weight: 400; }
</style>
